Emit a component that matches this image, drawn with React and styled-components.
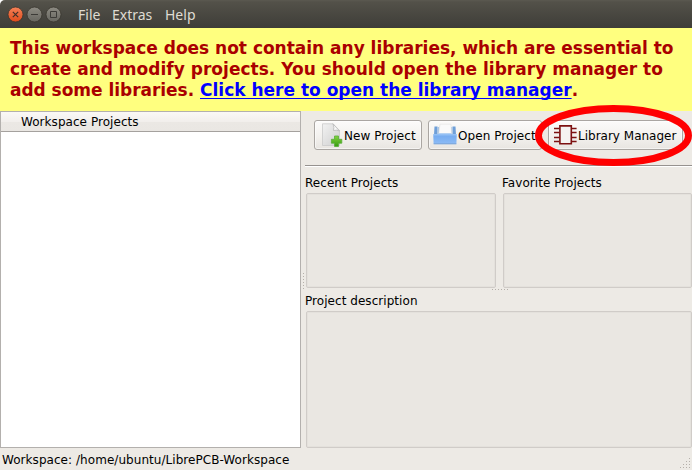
import React from "react";
import styled, { createGlobalStyle } from "styled-components";

const GlobalStyle = createGlobalStyle`
  * { box-sizing: border-box; }
  body { margin: 0; background: #fff; }
`;

const Window = styled.div`
  position: relative;
  width: 692px;
  height: 470px;
  display: flex;
  flex-direction: column;
  overflow: hidden;
  background: #edeae5;
  color: #000;
  font: 12px/14px "DejaVu Sans", sans-serif;
  letter-spacing: 0.05px;
  white-space: nowrap;
  border-radius: 5px 0 0 0;
`;

const TitleBar = styled.header`
  flex: none;
  height: 28px;
  display: flex;
  align-items: center;
  padding-left: 7px;
  background: linear-gradient(#5b5950 0, #535149 2px, #3e3d38 100%);
`;

const WindowControls = styled.svg`
  display: block;
  width: 56px;
  height: 18px;
  margin-right: 15px;
`;

const MenuItem = styled.span`
  width: ${(p) => p.$width}px;
  font: 14px/18px "Noto Sans", sans-serif;
  letter-spacing: 0;
  color: #dfdbd2;
  margin: 1px 10px 0 0;
`;

const Banner = styled.div`
  flex: none;
  height: 83px;
  padding: 10px 10px 0;
  background: #ffff7f;
  color: #aa0000;
  font: bold 17px/21px "DejaVu Sans", sans-serif;
`;

const BannerLine = styled.div`
  letter-spacing: ${(p) => p.$spacing || 0}px;
`;

const BannerLink = styled.a`
  color: #0000ff;
  letter-spacing: 0;
  text-decoration: underline;
  text-decoration-thickness: 1px;
  text-underline-offset: 2px;
  text-decoration-skip-ink: none;
`;

const Body = styled.main`
  flex: none;
  height: 337px;
  display: flex;
`;

const Tree = styled.section`
  width: 301px;
  border: 1px solid #b3b0ad;
  background: #fff;
`;

const TreeHeader = styled.div`
  height: 20px;
  padding: 3px 0 0 20px;
  border-bottom: 1px solid #a5a19e;
  background: linear-gradient(#faf8f6, #f2efec 50%, #ebe8e4 51%, #eae7e3);
`;

const SideHandle = styled.div`
  width: 4px;
  padding: 162px 0 0 1px;
`;

const Dots = styled.svg`
  display: block;
  fill: #b5b0aa;
`;

const Content = styled.section`
  flex: 1;
  min-width: 0;
  display: flex;
  flex-direction: column;
`;

const Toolbar = styled.div`
  height: 54px;
  display: flex;
  gap: 6px;
  padding: 9px 9px 0;
`;

const ToolButton = styled.button`
  flex: none;
  width: ${(p) => p.$width}px;
  height: 30px;
  display: flex;
  align-items: center;
  gap: 1px;
  padding: 0 0 0 4px;
  border: 1px solid #aaa6a2;
  border-radius: 3px;
  background: linear-gradient(#fcfbfa, #f3f1ee 55%, #e8e5e1);
  box-shadow: inset 0 0 0 1px rgba(255, 255, 255, 0.55);
  color: #000;
  font: inherit;
  letter-spacing: ${(p) => p.$spacing ?? 0.06}px;
  white-space: nowrap;
`;

const ButtonLabel = styled.span`
  padding-top: 2px;
`;

const ButtonIcon = styled.svg`
  flex: none;
  display: block;
  width: 24px;
  height: 24px;
`;

const Separator = styled.div`
  height: 2px;
  background: #fff;
  border-top: 1px solid #96928f;
`;

const Row = styled.div`
  display: flex;
  gap: 6px;
  height: 121px;
`;

const Group = styled.div`
  flex: none;
  width: ${(p) => p.$width}px;
  padding-top: ${(p) => p.$top}px;
`;

const Label = styled.div`
  height: 14px;
  margin-bottom: 3px;
`;

const ListBox = styled.div`
  height: ${(p) => p.$height}px;
  margin-left: 1px;
  border: 1px solid #d0ccc8;
  border-radius: 2px;
  background: #eae7e2;
  box-shadow: inset 0 0 0 1px #e4e1dc;
`;

const RowHandle = styled.div`
  height: 8px;
  padding: 0 0 0 187px;
  margin-bottom: -8px;
`;

const StatusBar = styled.footer`
  height: 22px;
  display: flex;
  justify-content: space-between;
  padding: 5px 1px 0 2px;
`;

const Highlight = styled.svg`
  position: absolute;
  left: 532px;
  top: 102px;
  pointer-events: none;
`;

function NewIcon() {
  return (
    <ButtonIcon viewBox="0 0 24 24">
      <defs>
        <linearGradient id="paper" x2="1" y2="1">
          <stop stopColor="#f2f2f2" />
          <stop offset="1" stopColor="#cfcfcf" />
        </linearGradient>
        <linearGradient id="plus" x2="0" y2="1">
          <stop stopColor="#83d340" />
          <stop offset="1" stopColor="#379b10" />
        </linearGradient>
      </defs>
      <path d="M3.500 .8H14L20.500 7.500V22.500H3.500Z" fill="url(#paper)" stroke="#cacaca" strokeWidth=".8" />
      <path d="M14 .8Q15.500 5 14.500 7.500Q18 6.500 20.500 8Z" fill="#fafafa" stroke="#b8b8b8" strokeWidth=".8" />
      <path d="M15.500 13h4v3.300h3.300v3.900h-3.300v3.300h-4v-3.300H12.400v-3.900h3.100Z" fill="url(#plus)" stroke="#58ad38" strokeWidth=".8" strokeLinejoin="round" />
    </ButtonIcon>
  );
}

function OpenIcon() {
  return (
    <ButtonIcon viewBox="0 0 24 24">
      <defs>
        <linearGradient id="tray" x2="0" y2="1">
          <stop stopColor="#a5ccf8" />
          <stop offset=".3" stopColor="#78adf0" />
          <stop offset="1" stopColor="#8bbaf5" />
        </linearGradient>
      </defs>
      <path d="M1.500 3.500H4.500V12H1Z M19.500 3.500H22.500L23 12H19.500Z" fill="#6f9fd8" />
      <path d="M4.500 4H19.500V13H4.500Z" fill="#a9c5e4" />
      <path d="M6 3.500L18 2.500V12H6Z" fill="#e6e6e6" />
      <path d="M7 1.200H18L18.500 10.500H5.800Z" fill="#fafafa" stroke="#ddd" strokeWidth=".5" />
      <path d="M.2 11H5.500L6.500 10.300H17.500L18.500 11H23.800L23.400 20.500H.6Z" fill="url(#tray)" />
      <path d="M.6 20.800H23.400" stroke="#6096d8" strokeWidth=".9" />
    </ButtonIcon>
  );
}

function ChipIcon() {
  return (
    <ButtonIcon viewBox="0 0 24 24" fill="none" stroke="#7d1111">
      <path d="M1 5.500H6.500M1 9.500H6.500M1 14.500H6.500M1 18.500H6.500M18.500 5.500H23.600M18.500 9.500H23.600M18.500 14.500H23.600M18.500 18.500H23.600" strokeWidth="1.300" />
      <path d="M6.900 2.900H18.300V20.700H6.900Z" fill="#f5f3f1" strokeWidth="1.600" />
    </ButtonIcon>
  );
}

function DotGrid({ width, height, points }) {
  return (
    <Dots width={width} height={height}>
      {points.map(([x, y]) => (
        <rect key={`${x}-${y}`} x={x} y={y} width="1" height="1" />
      ))}
    </Dots>
  );
}

const steps = [0, 3, 6, 9, 12, 15];
const gripPoints = [
  [9, 0], [6, 3], [9, 3], [3, 6], [6, 6], [9, 6], [0, 9], [3, 9], [6, 9], [9, 9],
];

export default function App() {
  return (
    <>
      <GlobalStyle />
      <Window>
        <TitleBar>
          <WindowControls viewBox="0 0 56 18">
            <defs>
              <linearGradient id="close" x2="0" y2="1">
                <stop stopColor="#f58258" />
                <stop offset="1" stopColor="#df4b1b" />
              </linearGradient>
              <linearGradient id="control" x2="0" y2="1">
                <stop stopColor="#8d8b83" />
                <stop offset="1" stopColor="#67665f" />
              </linearGradient>
            </defs>
            <circle cx="8.500" cy="9.500" r="7.500" fill="url(#close)" stroke="#38362f" strokeWidth=".8" />
            <path d="M5.800 6.800L11.200 12.200M11.200 6.800L5.800 12.200" stroke="#403029" strokeWidth="1.200" />
            <circle cx="27.500" cy="9.500" r="7.500" fill="url(#control)" stroke="#38362f" strokeWidth=".8" />
            <path d="M24 9.500H31" stroke="#3c3b37" />
            <circle cx="46.500" cy="9.500" r="7.500" fill="url(#control)" stroke="#38362f" strokeWidth=".8" />
            <path d="M43.500 6.500H49.500V12.500H43.500Z" fill="none" stroke="#3c3b37" />
          </WindowControls>
          <MenuItem $width={24}>File</MenuItem>
          <MenuItem $width={43}>Extras</MenuItem>
          <MenuItem $width={32}>Help</MenuItem>
        </TitleBar>

        <Banner>
          <BannerLine $spacing={-0.012}>This workspace does not contain any libraries, which are essential to</BannerLine>
          <BannerLine $spacing={0.016}>create and modify projects. You should open the library manager to</BannerLine>
          <BannerLine $spacing={-0.03}>
            add some libraries. <BannerLink>Click here to open the library manager</BannerLink>.
          </BannerLine>
        </Banner>

        <Body>
          <Tree>
            <TreeHeader>Workspace Projects</TreeHeader>
          </Tree>
          <SideHandle>
            <DotGrid width={3} height={18} points={steps.map((y) => [1, y])} />
          </SideHandle>
          <Content>
            <Toolbar>
              <ToolButton $width={108}><NewIcon /><ButtonLabel>New Project</ButtonLabel></ToolButton>
              <ToolButton $width={114}><OpenIcon /><ButtonLabel>Open Project</ButtonLabel></ToolButton>
              <ToolButton $width={135} $spacing={0}><ChipIcon /><ButtonLabel>Library Manager</ButtonLabel></ToolButton>
            </Toolbar>
            <Separator />
            <Row>
              <Group $width={191} $top={9}>
                <Label>Recent Projects</Label>
                <ListBox $height={95} />
              </Group>
              <Group $width={190} $top={9}>
                <Label>Favorite Projects</Label>
                <ListBox $height={95} />
              </Group>
            </Row>
            <RowHandle>
              <DotGrid width={18} height={8} points={steps.map((x) => [x, 1])} />
            </RowHandle>
            <Group $width={387} $top={6}>
              <Label>Project description</Label>
              <ListBox $height={137} />
            </Group>
          </Content>
        </Body>

        <StatusBar>
          <span>Workspace: /home/ubuntu/LibrePCB-Workspace</span>
          <DotGrid width={11} height={15} points={gripPoints.map(([x, y]) => [x, y + 5])} />
        </StatusBar>

        <Highlight width="160" height="68" viewBox="0 0 160 68">
          <ellipse cx="81.500" cy="33.500" rx="75" ry="27" fill="none" stroke="#f00" strokeWidth="7" />
        </Highlight>
      </Window>
    </>
  );
}
